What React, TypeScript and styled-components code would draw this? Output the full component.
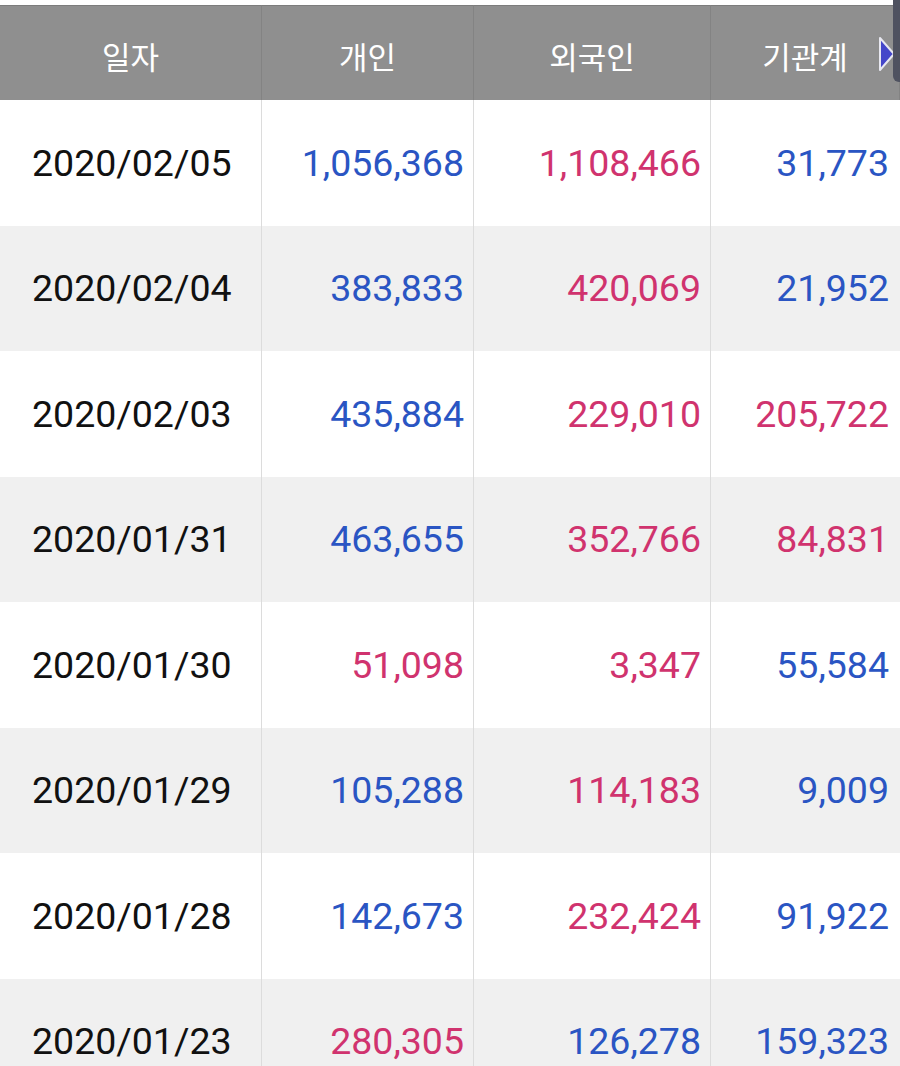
import React from 'react'
import styled, { createGlobalStyle } from 'styled-components'

const GlobalStyle = createGlobalStyle`
    html, body {
        margin: 0;
        padding: 0;
        background: #ffffff;
        overflow: hidden;
    }
    body {
        font-family: Roboto, "Noto Sans CJK KR", sans-serif;
    }
`

type Tone = 'up' | 'down'

interface Row {
    date: string
    values: [string, Tone][]
}

const rows: Row[] = [
    { date: '2020/02/05', values: [['1,056,368', 'down'], ['1,108,466', 'up'], ['31,773', 'down']] },
    { date: '2020/02/04', values: [['383,833', 'down'], ['420,069', 'up'], ['21,952', 'down']] },
    { date: '2020/02/03', values: [['435,884', 'down'], ['229,010', 'up'], ['205,722', 'up']] },
    { date: '2020/01/31', values: [['463,655', 'down'], ['352,766', 'up'], ['84,831', 'up']] },
    { date: '2020/01/30', values: [['51,098', 'up'], ['3,347', 'up'], ['55,584', 'down']] },
    { date: '2020/01/29', values: [['105,288', 'down'], ['114,183', 'up'], ['9,009', 'down']] },
    { date: '2020/01/28', values: [['142,673', 'down'], ['232,424', 'up'], ['91,922', 'down']] },
    { date: '2020/01/23', values: [['280,305', 'up'], ['126,278', 'down'], ['159,323', 'down']] },
]

const Screen = styled.div`
    position: relative;
    width: 900px;
    height: 1066px;
    overflow: hidden;
    padding-top: 5px;
    box-sizing: border-box;
    background: #ffffff;
`

const Table = styled.div`
    display: grid;
    grid-template-columns: 262px 212px 237px 189px;
`

const HeadCell = styled.div`
    height: 95px;
    box-sizing: border-box;
    background: #8f8f8f;
    border-top: 1px solid #7c7c7c;
    border-right: 1px solid #838383;
    display: flex;
    align-items: center;
    justify-content: center;
    padding-top: 4px;
    color: #ffffff;
    font-family: "Noto Sans CJK KR", "Noto Sans", sans-serif;
    font-size: 31px;
    font-weight: 400;

    &:last-child {
        border-right: none;
    }
`

const Cell = styled.div<{ $striped: boolean; $align: 'left' | 'right'; $tone?: Tone; $last?: boolean }>`
    height: 125.5px;
    box-sizing: border-box;
    background: ${(p) => (p.$striped ? '#f0f0f0' : '#ffffff')};
    border-right: ${(p) => (p.$last ? 'none' : '1px solid #dcdcdc')};
    display: flex;
    align-items: center;
    justify-content: ${(p) => (p.$align === 'left' ? 'flex-start' : 'flex-end')};
    padding: ${(p) => (p.$align === 'left' ? '0 0 0 32px' : p.$last ? '0 11px 0 0' : '0 9px 0 0')};
    font-family: Roboto, "Liberation Sans", sans-serif;
    font-size: 37.5px;
    color: ${(p) => (p.$tone === 'up' ? '#d0336e' : p.$tone === 'down' ? '#2a55c3' : '#111111')};
`

const NextArrow = styled.svg`
    position: absolute;
    top: 35px;
    right: 3px;
    width: 20px;
    height: 38px;
`

const ScrollThumb = styled.div`
    position: absolute;
    top: 0;
    right: 0;
    width: 7px;
    height: 82px;
    background: #4f5260;
    border-bottom-left-radius: 6px;
`

const headers = ['일자', '개인', '외국인', '기관계']

export default function App() {
    return (
        <Screen>
            <GlobalStyle />
            <Table>
                {headers.map((h) => (
                    <HeadCell key={h}>{h}</HeadCell>
                ))}
                {rows.map((row, i) => (
                    <React.Fragment key={row.date}>
                        <Cell $striped={i % 2 === 1} $align="left">
                            {row.date}
                        </Cell>
                        {row.values.map(([v, tone], j) => (
                            <Cell key={j} $striped={i % 2 === 1} $align="right" $tone={tone} $last={j === 2}>
                                {v}
                            </Cell>
                        ))}
                    </React.Fragment>
                ))}
            </Table>
            <NextArrow viewBox="0 0 20 38">
                <path d="M3 3 L17 19 L3 35 Z" fill="#4446c9" stroke="#e8e8f0" strokeWidth="2" strokeLinejoin="round" />
            </NextArrow>
            <ScrollThumb />
        </Screen>
    )
}
